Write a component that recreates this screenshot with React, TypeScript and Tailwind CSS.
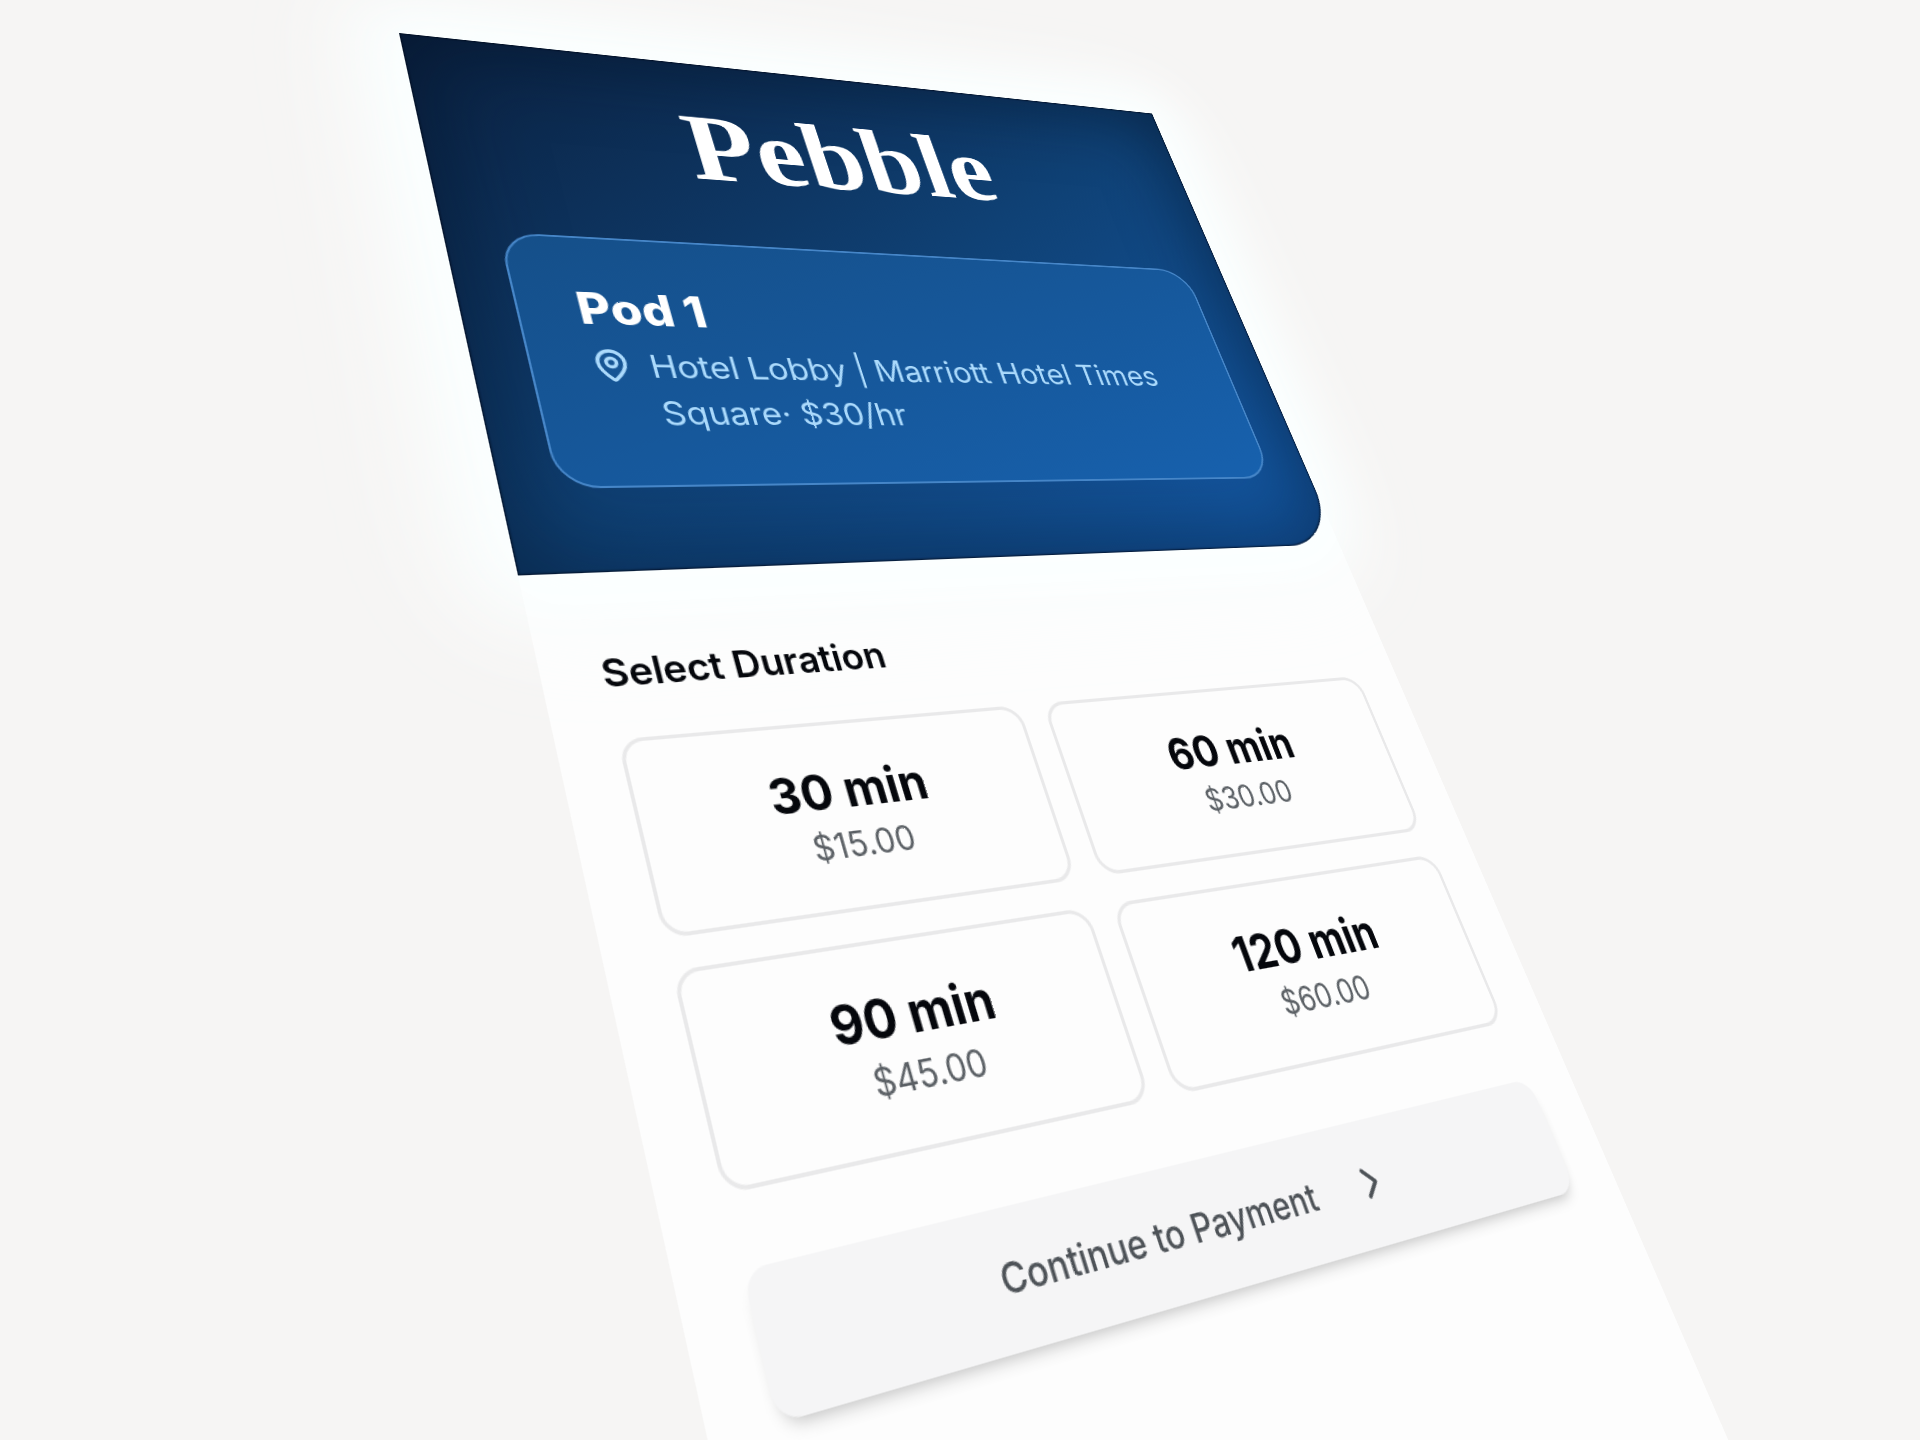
import { ChevronRight, MapPin } from "lucide-react";

const durations = [
  { label: "30 min", price: "$15.00" },
  { label: "60 min", price: "$30.00" },
  { label: "90 min", price: "$45.00" },
  { label: "120 min", price: "$60.00" },
];

function PodHeader() {
  return (
    <header className="rounded-br-[64px] bg-linear-to-br from-[#0a2140] via-[#0f4175] to-[#145aa8] px-12 pt-10 pb-[78px] shadow-[0_0_64px_28px_#fbffff,0_0_120px_36px_rgba(251,255,255,0.7),inset_0_0_90px_8px_rgba(4,18,38,0.5),inset_0_0_2px_1px_rgba(2,10,28,0.8)]">
      {/* Logo */}
      <h1 className="flex h-[182px] items-start justify-center font-['Liberation_Serif',serif] text-[116px] leading-[132px] font-bold text-white">
        Pebble
      </h1>

      {/* Pod info */}
      <section className="rounded-[36px] border-2 border-[#4686c8] bg-linear-to-br from-[#154f89] to-[#1761ae] px-[52px] py-12">
        <h2 className="mb-2 text-[46px] leading-14 font-extrabold text-white">
          Pod 1
        </h2>
        <div className="flex gap-4 text-[33px] leading-12 text-[#abdafc]">
          <MapPin className="mt-1.5 size-9 shrink-0" strokeWidth={2.25} />
          <p>
            Hotel Lobby | Marriott Hotel Times
            <br />
            Square· $30/hr
          </p>
        </div>
      </section>
    </header>
  );
}

function DurationOption({ label, price }: { label: string; price: string }) {
  return (
    <button
      type="button"
      className="flex h-[158px] flex-col items-center justify-center rounded-[20px] border-3 border-[#e9e9ea]"
    >
      <span className="text-[41px] leading-[52px] font-bold text-[#05070c]">
        {label}
      </span>
      <span className="text-[28px] leading-10 text-[#5b6065]">{price}</span>
    </button>
  );
}

export default function App() {
  return (
    <div className="h-screen overflow-hidden bg-[#f6f5f4] font-['Inter',sans-serif]">
      {/* Tilted phone screen */}
      <main className="min-h-[1520px] w-[832px] origin-top-left bg-[#fdfdfd] [transform:matrix3d(1.251116,0.130851,0,0.000300405,0.083227,0.825129,0,-0.000249561,0,0,1,0,399,33,0,1)]">
        <PodHeader />

        <div className="relative flex flex-col px-12 pt-16">
          <h2 className="mb-8 text-[33px] leading-12 font-semibold text-[#05070c]">
            Select Duration
          </h2>

          <div className="grid grid-cols-2 gap-6">
            {durations.map((d) => (
              <DurationOption key={d.label} label={d.label} price={d.price} />
            ))}
          </div>

          <button
            type="button"
            className="mt-[50px] flex h-24 items-center justify-center gap-9 rounded-[18px] bg-[#f5f5f6] text-[29px] font-medium text-[#4d5257] shadow-[0_8px_12px_-6px_rgba(0,0,0,0.25)]"
          >
            Continue to Payment
            <ChevronRight className="size-10" />
          </button>
        </div>
      </main>
    </div>
  );
}
